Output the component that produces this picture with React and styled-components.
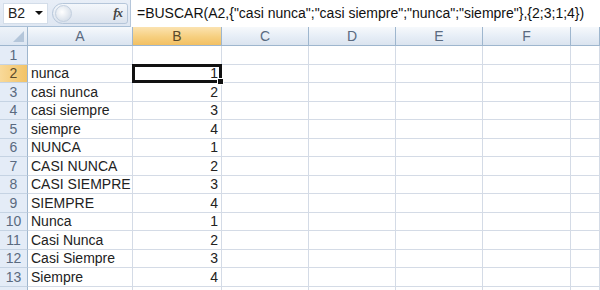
import React from "react";
import styled, { createGlobalStyle, css } from "styled-components";

const Global = createGlobalStyle`
  html, body { margin: 0; padding: 0; background: #fff; }
  body { font-family: "Liberation Sans", Arial, sans-serif; overflow: hidden; }
`;

const Page = styled.div`
  width: 600px;
  height: 290px;
  overflow: hidden;
  background: #fff;
`;

const FormulaBar = styled.div`
  height: 27px;
  box-sizing: border-box;
  display: flex;
  align-items: center;
  background: linear-gradient(#e8eef7, #dfe7f2);
  border-bottom: 1px solid #a9bfd6;
`;

const NameBox = styled.div`
  width: 45px;
  height: 21px;
  margin-left: 3px;
  box-sizing: border-box;
  background: #fff;
  border: 1px solid #d3dde9;
  display: flex;
  align-items: center;
  justify-content: space-between;
  padding: 0 4px 0 4px;
  font-size: 14px;
  color: #222;
`;

const Arrow = styled.span`
  width: 0;
  height: 0;
  border-left: 4px solid transparent;
  border-right: 4px solid transparent;
  border-top: 4px solid #111;
`;

const Pill = styled.div`
  margin-left: 4px;
  width: 76px;
  height: 21px;
  box-sizing: border-box;
  border: 1px solid #b5c6da;
  border-radius: 11px 3px 3px 11px;
  background: linear-gradient(#f4f7fb, #dbe3ee);
  display: flex;
  align-items: center;
  justify-content: space-between;
  padding: 0 5px 0 2px;
`;

const Knob = styled.span`
  width: 15px;
  height: 15px;
  border-radius: 50%;
  background: radial-gradient(circle at 40% 40%, #ffffff, #c9d4e2);
  border: 1px solid #c2cfdf;
`;

const Fx = styled.span`
  font-family: "Liberation Serif", "Times New Roman", serif;
  font-style: italic;
  font-weight: bold;
  font-size: 13px;
  color: #444;
  letter-spacing: -1px;
`;

const FormulaInput = styled.div`
  flex: 1;
  height: 27px;
  margin-left: 2px;
  box-sizing: border-box;
  background: #fff;
  border-left: 1px solid #b5c6da;
  display: flex;
  align-items: center;
  padding-left: 6px;
  font-size: 14px;
  color: #111;
  white-space: nowrap;
  overflow: hidden;
`;

const Grid = styled.div`
  display: grid;
  grid-template-columns: 28px 105px 89px 87px 87px 87px 88px 1fr;
  grid-template-rows: 19px;
  grid-auto-rows: 18.5px;
`;

const headerBase = css`
  box-sizing: border-box;
  display: flex;
  align-items: center;
  justify-content: center;
  font-size: 14px;
  color: #4a5a70;
  border-right: 1px solid #9eb6ce;
  border-bottom: 1px solid #9eb6ce;
`;

const Corner = styled.div`
  ${headerBase};
  position: relative;
  background: linear-gradient(#eef3f9, #dce6f2);
  &::after {
    content: "";
    position: absolute;
    right: 3px;
    bottom: 3px;
    width: 0;
    height: 0;
    border-left: 11px solid transparent;
    border-bottom: 11px solid #b4c6da;
  }
`;

const ColHead = styled.div`
  ${headerBase};
  background: ${(p) =>
    p.$active
      ? "linear-gradient(#fbe3b1, #f6cf7f 55%, #f2c063)"
      : "linear-gradient(#f6f9fc, #e6edf6 55%, #dbe4ef)"};
  color: ${(p) => (p.$active ? "#5b4a2a" : "#5a6a80")};
`;

const RowHead = styled.div`
  ${headerBase};
  border-bottom-color: #c5d3e3;
  background: ${(p) =>
    p.$active ? "linear-gradient(90deg, #f8d999, #f2c367)" : "#e4ecf7"};
  color: ${(p) => (p.$active ? "#5b4a2a" : "#5a6a80")};
`;

const Cell = styled.div`
  position: relative;
  box-sizing: border-box;
  border-right: 1px solid #d4dbe6;
  border-bottom: 1px solid #d4dbe6;
  display: flex;
  align-items: center;
  justify-content: ${(p) => (p.$num ? "flex-end" : "flex-start")};
  padding: 0 3px;
  font-size: 14px;
  color: #222;
  white-space: nowrap;
  ${(p) =>
    p.$selected &&
    css`
      &::after {
        content: "";
        position: absolute;
        left: -1px;
        top: -1px;
        right: -1px;
        bottom: -1px;
        border: 3px solid #111;
      }
      &::before {
        content: "";
        position: absolute;
        right: -3px;
        bottom: -3px;
        width: 5px;
        height: 5px;
        background: #111;
        border: 1px solid #fff;
        z-index: 2;
      }
    `}
`;

const cols = ["A", "B", "C", "D", "E", "F", ""];

const data = [
  ["", ""],
  ["nunca", 1],
  ["casi nunca", 2],
  ["casi siempre", 3],
  ["siempre", 4],
  ["NUNCA", 1],
  ["CASI NUNCA", 2],
  ["CASI SIEMPRE", 3],
  ["SIEMPRE", 4],
  ["Nunca", 1],
  ["Casi Nunca", 2],
  ["Casi Siempre", 3],
  ["Siempre", 4],
  ["", ""],
];

export default function App() {
  return (
    <Page>
      <Global />
      <FormulaBar>
        <NameBox>
          B2
          <Arrow />
        </NameBox>
        <Pill>
          <Knob />
          <Fx>fx</Fx>
        </Pill>
        <FormulaInput>
          =BUSCAR(A2,{"{"}"casi nunca";"casi siempre";"nunca";"siempre"{"}"},{"{"}2;3;1;4{"}"})
        </FormulaInput>
      </FormulaBar>
      <Grid>
        <Corner />
        {cols.map((c, i) => (
          <ColHead key={i} $active={c === "B"}>
            {c}
          </ColHead>
        ))}
        {data.map((row, r) => (
          <React.Fragment key={r}>
            <RowHead $active={r === 1}>{r < 13 ? r + 1 : ""}</RowHead>
            <Cell>{row[0]}</Cell>
            <Cell $num $selected={r === 1}>
              {row[1]}
            </Cell>
            <Cell />
            <Cell />
            <Cell />
            <Cell />
            <Cell />
          </React.Fragment>
        ))}
      </Grid>
    </Page>
  );
}
